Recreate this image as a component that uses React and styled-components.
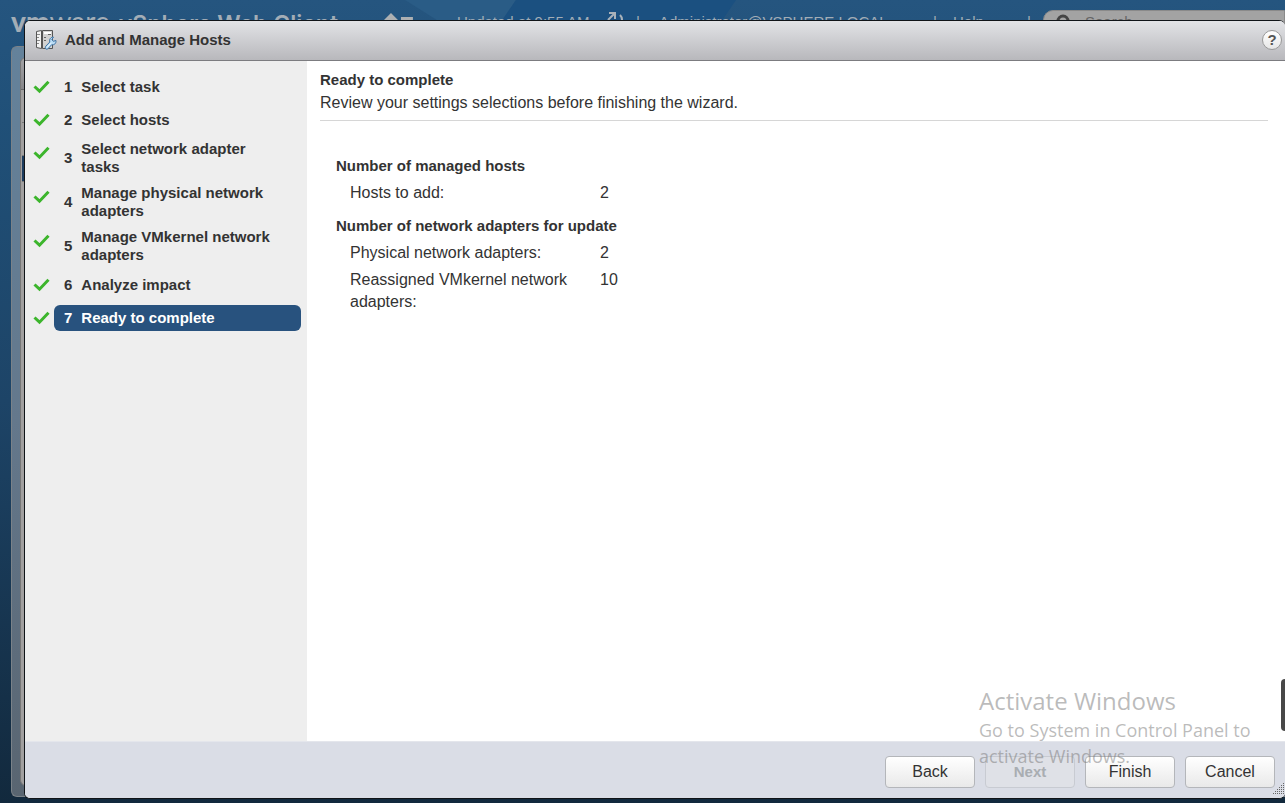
import React from "react";
import styled, { createGlobalStyle, css } from "styled-components";

const sans = '"Liberation Sans", Arial, sans-serif';

const GlobalStyle = createGlobalStyle`
  * { box-sizing: border-box; }
  html { background: #12293d; }
  body { margin: 0; font: 15px/18px ${sans}; color: #333; }
  h1, h2, p, ol { margin: 0; padding: 0; }
  button, input { font: inherit; }
`;

const Desktop = styled.div`
  position: relative;
  display: flex;
  flex-direction: column;
  min-height: 100vh;
  overflow: hidden;
  background: linear-gradient(#25557f 0, #205078 15%, #1d4467 50%, #12293d 100%);
`;

const TopBar = styled.header`
  position: relative;
  display: flex;
  align-items: center;
  height: 44px;
  padding-left: 11px;
  color: #a3adb6;
  white-space: nowrap;
`;

const Facets = styled.svg`
  position: absolute;
  inset: 0;
  width: 1285px;
  height: 44px;
`;

const Brand = styled.div`
  position: relative;
  display: flex;
  align-items: baseline;
  gap: 9px;
  width: 374px;
  font: 600 23px/30px Inter, sans-serif;
`;

const Logo = styled.span`
  font: 400 28px/30px Lato, sans-serif;
  b { font-weight: 900; }
`;

const HomeIcon = styled.svg`
  position: relative;
  width: 30px;
  height: 18px;
  margin-right: 43px;
`;

const Session = styled.div`
  position: relative;
  display: flex;
  flex: 1;
  align-items: center;
`;

const SessionItem = styled.span`
  width: ${(p) => p.$width}px;
`;

const Search = styled.label`
  display: flex;
  flex: 1;
  align-items: center;
  gap: 14px;
  height: 24px;
  padding-left: 12px;
  border: 1px solid #8a8a8a;
  border-radius: 10px 0 0 10px;
  background: #a3a3a3;
  color: #555;
  input {
    flex: 1;
    min-width: 0;
    padding: 0;
    border: 0;
    background: transparent;
  }
  input::placeholder { color: #666; opacity: 1; }
`;

const Workspace = styled.div`
  display: flex;
  flex: 1;
  margin: 2px 0 6px 11px;
  padding: 10px 0 10px 8px;
  border: 1px solid #7b8288;
  border-right: 0;
  border-radius: 6px 0 0 6px;
  background: linear-gradient(#64829b, #64788c 50%, #596571);
`;

const WorkspacePanel = styled.div`
  flex: 1;
  border: 1px solid #777;
  border-radius: 6px 0 0 6px;
  background: #a19f9f;
`;

const PanelHead = styled.div`
  height: 32px;
  border-bottom: 1px solid #666;
  border-radius: 6px 0 0 0;
  background: linear-gradient(#a3a3a6, #858588);
`;

const PanelRow = styled.div`
  height: ${(p) => (p.$selected ? 26 : 33)}px;
  margin-left: 1px;
  border-bottom: 1px solid #777;
  ${(p) => p.$selected && css`background: #1d3c5e;`}
`;

const Dialog = styled.section`
  position: absolute;
  inset: 20px 0 4px 24px;
  display: flex;
  flex-direction: column;
  overflow: hidden;
  border: 1px solid #101418;
  border-right: 0;
  border-radius: 6px;
  background: #fff;
`;

const TitleBar = styled.div`
  display: flex;
  flex: none;
  align-items: center;
  gap: 8px;
  height: 40px;
  padding: 0 3px 2px 11px;
  border-bottom: 1px solid #7c7c80;
  background: linear-gradient(#e2e3e6, #b8b8bc);
`;

const Title = styled.h1`
  flex: 1;
  font: 700 15px/18px ${sans};
`;

const HelpButton = styled.button`
  width: 20px;
  height: 20px;
  padding: 0;
  border: 1px solid #999;
  border-radius: 50%;
  background: linear-gradient(#fff, #e6e6e6);
  color: #555;
  font: 700 15px/18px ${sans};
`;

const Body = styled.div`
  display: flex;
  flex: 1;
  min-height: 0;
`;

const Steps = styled.nav`
  flex: none;
  width: 282px;
  padding: 13px 6px 0 8px;
  background: #eeeeee;
`;

const StepList = styled.ol`
  display: flex;
  flex-direction: column;
  gap: 7px;
  list-style: none;
`;

const StepItem = styled.li`
  display: flex;
  gap: 4px;
`;

const Check = styled.svg`
  flex: none;
  width: 17px;
  height: 14px;
  margin-top: 6px;
`;

const StepButton = styled.button`
  display: flex;
  flex: 1;
  align-items: center;
  gap: 9px;
  min-height: ${(p) => (p.$tall ? 37 : 26)}px;
  padding: 0 20px 1px 10px;
  border: 0;
  border-radius: 6px;
  background: ${(p) => (p.$current ? "#28527e" : "transparent")};
  color: ${(p) => (p.$current ? "#fff" : "#333")};
  font-weight: 700;
  text-align: left;
`;

const Content = styled.main`
  flex: 1;
  padding: 10px 17px 0 13px;
  font-size: 16px;
`;

const Intro = styled.div`
  padding-bottom: 8px;
  border-bottom: 1px solid #d6d6d6;
  h2 { font: 700 15px/18px ${sans}; }
  p { margin-top: 5px; }
`;

const Summary = styled.table`
  margin: 34px 0 0 15px;
  border-collapse: collapse;
  text-align: left;
  line-height: 22px;
`;

const GroupHead = styled.th`
  padding: ${(p) => (p.$first ? 0 : 6)}px 0 5px 1px;
  font-size: 15px;
  font-weight: 700;
`;

const Label = styled.th`
  width: 265px;
  padding: 0 30px 5px 15px;
  font-weight: 400;
`;

const Value = styled.td`
  padding: 0 0 5px;
  vertical-align: top;
`;

const Footer = styled.footer`
  position: relative;
  display: flex;
  flex: none;
  justify-content: flex-end;
  gap: 10px;
  padding: 14px 10px 10px;
  border-top: 1px solid #e4e6ec;
  background: #dadde6;
`;

const Action = styled.button`
  width: 90px;
  height: 32px;
  border: 1px solid #b4b6ba;
  border-radius: 4px;
  background: linear-gradient(#fff, #e9e9e9);
  color: #333;
  font-size: 16px;
  &:disabled {
    border-color: #c8cbd2;
    background: #dfe1e7;
    color: #a9adb2;
    font-size: 15px;
    font-weight: 700;
  }
`;

const Grip = styled.svg`
  position: absolute;
  right: 0;
  bottom: 2px;
  width: 14px;
  height: 14px;
`;

const Watermark = styled.aside`
  position: absolute;
  right: 0;
  bottom: 34px;
  width: 306px;
  padding-right: 22px;
  color: rgba(120, 120, 120, 0.5);
  font: 18px/26px "Open Sans", sans-serif;
  pointer-events: none;
  strong { display: block; font: 24px/32px "Open Sans", sans-serif; }
`;

const EdgeTab = styled.div`
  position: absolute;
  right: 0;
  bottom: 72px;
  width: 4px;
  height: 52px;
  border-radius: 4px 0 0 4px;
  background: #484848;
`;

const steps = [
  { label: "Select task" },
  { label: "Select hosts" },
  { label: "Select network adapter tasks", tall: true },
  { label: "Manage physical network adapters", tall: true },
  { label: "Manage VMkernel network adapters", tall: true },
  { label: "Analyze impact" },
  { label: "Ready to complete", current: true },
];

const groups = [
  { title: "Number of managed hosts", rows: [["Hosts to add:", "2"]] },
  {
    title: "Number of network adapters for update",
    rows: [
      ["Physical network adapters:", "2"],
      ["Reassigned VMkernel network adapters:", "10"],
    ],
  },
];

function HostIcon() {
  return (
    <svg width="21" height="22" viewBox="0 0 21 22" fill="none" aria-hidden="true">
      <path d="M.5 2.500l5-1v18l-5-1z" fill="#f2f2f2" stroke="#555" />
      <path d="M1 5.500h3M1 8.500h2M1 11.500h3M1 14.500h2" stroke="#888" />
      <path d="M6.500 1.500h10v18h-10z" fill="#d2d2d2" stroke="#555" />
      <path d="M8 4h7" stroke="#fff" strokeWidth="2" />
      <path d="M12 5.500h3M8 8.500h2M8 11.500h2" stroke="#666" />
      <path
        d="M9.800 17.200l4-4.200c-.8-2.800 1-5 3.700-4.900l-1.600 2.300 1.400 1.900 2.700-.8c.3 2.900-1.800 4.800-4.300 4.200l-3.900 4.200c-1.500 1.300-3.500-1-2-2.700z"
        fill="#b9dcf5"
        stroke="#3c72a3"
      />
      <path d="M11 18.500l4.500-4.800" stroke="#eef8ff" />
    </svg>
  );
}

export default function App() {
  return (
    <>
      <GlobalStyle />
      <Desktop>
        <TopBar>
          <Facets viewBox="0 0 1285 44" aria-hidden="true">
            <path d="M405 0H516L486 44H475z" fill="#2a5c86" />
            <path d="M516 0H736L706 44H486z" fill="#1b5080" />
          </Facets>
          <Brand>
            <Logo><b>vm</b>ware</Logo>
            <span>vSphere Web Client</span>
          </Brand>
          <HomeIcon viewBox="0 0 30 18" fill="#adb0b2" aria-hidden="true">
            <path d="M7 0L0 7h3v8h8V7h3zM17 4h12v3l-6 4-6-4z" />
          </HomeIcon>
          <Session>
            <SessionItem $width={148}>Updated at 9:55 AM</SessionItem>
            <SessionItem $width={31}>
              <svg width="20" height="18" viewBox="0 0 20 18" fill="none" stroke="#a9b2ba" strokeWidth="2" aria-hidden="true">
                <path d="M4 2h6v6M10 2L3 9M15 4q4 4 0 10" />
              </svg>
            </SessionItem>
            <SessionItem $width={23}>|</SessionItem>
            <SessionItem $width={274}>Administrator@VSPHERE.LOCAL</SessionItem>
            <SessionItem $width={20}>|</SessionItem>
            <SessionItem $width={74}>Help</SessionItem>
            <SessionItem $width={16}>|</SessionItem>
            <Search>
              <svg width="15" height="16" viewBox="0 0 15 16" fill="none" stroke="#444" strokeWidth="3" aria-hidden="true">
                <circle cx="7" cy="7" r="5" />
                <path d="M4 11l-3 4" />
              </svg>
              <input type="text" placeholder="Search" aria-label="Search" />
            </Search>
          </Session>
        </TopBar>

        <Workspace>
          <WorkspacePanel>
            <PanelHead />
            <PanelRow />
            <PanelRow />
            <PanelRow $selected />
          </WorkspacePanel>
        </Workspace>

        <Dialog role="dialog" aria-labelledby="wizard-title">
          <TitleBar>
            <HostIcon />
            <Title id="wizard-title">Add and Manage Hosts</Title>
            <HelpButton type="button" aria-label="Help">?</HelpButton>
          </TitleBar>
          <Body>
            <Steps aria-label="Wizard steps">
              <StepList>
                {steps.map((step, i) => (
                  <StepItem key={step.label}>
                    <Check viewBox="0 0 17 14" fill="none" stroke="#3cb52c" strokeWidth="3" aria-hidden="true">
                      <path d="M1.500 6.500L6.500 11.200 15.500 1.800" />
                    </Check>
                    <StepButton type="button" $tall={step.tall} $current={step.current}>
                      <span>{i + 1}</span>
                      <span>{step.label}</span>
                    </StepButton>
                  </StepItem>
                ))}
              </StepList>
            </Steps>
            <Content>
              <Intro>
                <h2>Ready to complete</h2>
                <p>Review your settings selections before finishing the wizard.</p>
              </Intro>
              <Summary>
                {groups.map((group, i) => (
                  <tbody key={group.title}>
                    <tr>
                      <GroupHead colSpan={2} scope="rowgroup" $first={i === 0}>{group.title}</GroupHead>
                    </tr>
                    {group.rows.map(([label, value]) => (
                      <tr key={label}>
                        <Label scope="row">{label}</Label>
                        <Value>{value}</Value>
                      </tr>
                    ))}
                  </tbody>
                ))}
              </Summary>
            </Content>
          </Body>
          <Footer>
            <Action type="button">Back</Action>
            <Action type="button" disabled>Next</Action>
            <Action type="button">Finish</Action>
            <Action type="button">Cancel</Action>
            <Grip viewBox="0 0 14 14" stroke="#666" strokeDasharray="1 1" aria-hidden="true">
              <path d="M12.500 1v12M10.500 3v10M8.500 5v8M6.500 7v6M4.500 9v4M2.500 11v2" />
            </Grip>
          </Footer>
        </Dialog>

        <Watermark>
          <strong>Activate Windows</strong>
          Go to System in Control Panel to activate Windows.
        </Watermark>
        <EdgeTab />
      </Desktop>
    </>
  );
}
